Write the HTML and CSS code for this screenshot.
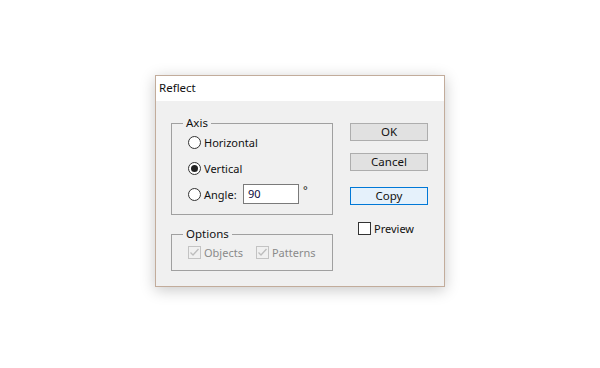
FILE: index.html
```html
<!DOCTYPE html>
<html>
<head>
<meta charset="utf-8">
<link rel="stylesheet" href="styles.css">
</head>
<body>
<div class="page">
  <div class="dialog">
    <div class="titlebar">Reflect</div>
    <div class="body">
      <div class="left">
        <fieldset class="group axis">
          <legend>Axis</legend>
          <div class="row first"><span class="radio"></span><span>Horizontal</span></div>
          <div class="row"><span class="radio checked"></span><span>Vertical</span></div>
          <div class="row"><span class="radio"></span><span class="anglbl">Angle:</span><span class="input">90</span><span class="deg">°</span></div>
        </fieldset>
        <fieldset class="group options">
          <legend>Options</legend>
          <div class="row dis">
            <span class="check disabled"><svg width="11" height="11" viewBox="0 0 11 11"><path d="M1.5 5.5 L4 8 L9.5 2" fill="none" stroke="#bdbdbd" stroke-width="1.3"/></svg></span><span class="lbl">Objects</span>
            <span class="check disabled"><svg width="11" height="11" viewBox="0 0 11 11"><path d="M1.5 5.5 L4 8 L9.5 2" fill="none" stroke="#bdbdbd" stroke-width="1.3"/></svg></span><span class="lbl">Patterns</span>
          </div>
        </fieldset>
      </div>
      <div class="right">
        <div class="btn">OK</div>
        <div class="btn">Cancel</div>
        <div class="btn primary">Copy</div>
        <div class="preview"><span class="check"></span><span>Preview</span></div>
      </div>
    </div>
  </div>
</div>
</body>
</html>
```

FILE: styles.css
```css
html, body { margin: 0; padding: 0; background: #fff; }
body { font-family: "Noto Sans", "DejaVu Sans", sans-serif; font-size: 11px; color: #111; }
.page { width: 600px; height: 368px; display: flex; justify-content: center; padding-top: 75px; box-sizing: border-box; }
.dialog { width: 290px; height: 212px; box-sizing: border-box; border: 1px solid #c2ac9b; background: #f0f0f0; box-shadow: 0 3px 14px rgba(0,0,0,0.22); display: flex; flex-direction: column; }
.titlebar { height: 25px; background: #fff; line-height: 24px; padding-left: 3px; font-size: 11.5px; color: #111; }
.body { flex: 1; display: flex; padding: 14px 16px 0 15px; gap: 17px; }
.left { width: 162px; display: flex; flex-direction: column; gap: 11px; }
.group { margin: 0; border: 1px solid #a0a0a0; padding: 0 0 0 16px; }
.group legend { padding: 0 3px; margin-left: -5px; line-height: 16px; font-size: 11.5px; }
.axis { height: 100px; box-sizing: border-box; padding-top: 0; }
.axis .row { height: 26px; display: flex; align-items: center; }
.axis .row.first { margin-top: -2px; }
.options { height: 45px; box-sizing: border-box; }
.row { display: flex; align-items: center; }
.radio { width: 11px; height: 11px; border: 1px solid #333; border-radius: 50%; background: #fff; margin-right: 3px; display: flex; align-items: center; justify-content: center; }
.radio.checked::after { content: ""; width: 7px; height: 7px; border-radius: 50%; background: #222; }
.anglbl { width: 39px; }
.input { height: 18px; border: 1px solid #7a7a7a; background: #fff; line-height: 18px; padding-left: 4px; box-sizing: content-box; color: #0a0a40; width: 50px; }
.deg { margin-left: 4px; margin-top: -9px; }
.dis { height: 20px; }
.check { width: 11px; height: 11px; border: 1px solid #333; background: #fff; margin-right: 3px; display: flex; align-items: center; justify-content: center; }
.check.disabled { border-color: #c3c3c3; background: #f0f0f0; }
.lbl { color: #8a8a8a; margin-right: 13px; }
.right { width: 78px; display: flex; flex-direction: column; padding-top: 8px; }
.btn { height: 16px; border: 1px solid #adadad; background: #e1e1e1; text-align: center; line-height: 16px; margin-bottom: 12px; font-size: 11.5px; }
.btn.primary { border-color: #0078d7; background: #e5f1fb; margin-top: 4px; }
.preview { display: flex; align-items: center; padding-left: 8px; margin-top: 4px; }
```
